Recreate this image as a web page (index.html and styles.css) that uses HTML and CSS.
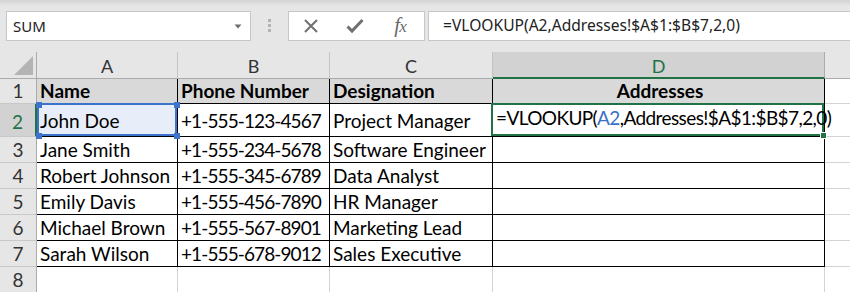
FILE: index.html
```html
<!DOCTYPE html>
<html>
<head>
<meta charset="utf-8">
<link rel="stylesheet" href="styles.css">
</head>
<body>
<div class="app">
  <div class="toolbar">
    <div class="namebox">
      <span class="nb-text">SUM</span>
      <svg class="nb-arrow" width="8" height="5" viewBox="0 0 8 5"><path d="M0.5 0.5h7l-3.5 4z" fill="#6d6d6d"/></svg>
    </div>
    <div class="grip"><i></i><i></i><i></i></div>
    <div class="fbtns">
      <div class="slot">
        <svg width="16" height="16" viewBox="0 0 16 16"><path d="M2 2L14 14M14 2L2 14" stroke="#707070" stroke-width="2" fill="none"/></svg>
      </div>
      <div class="slot">
        <svg width="18" height="16" viewBox="0 0 18 16"><path d="M1.5 8.5L6 13L16.5 2" stroke="#707070" stroke-width="3" fill="none"/></svg>
      </div>
      <div class="slot"><span class="fx">f<span class="fx-x">x</span></span></div>
    </div>
    <div class="fbar">=VLOOKUP(A2,Addresses!$A$1:$B$7,2,0)</div>
  </div>

  <div class="sheet">
    <div class="corner"><svg width="19" height="19" viewBox="0 0 19 19"><path d="M19 0V19H0z" fill="#b4b4b4"/></svg></div>
    <div class="hd">A</div>
    <div class="hd">B</div>
    <div class="hd">C</div>
    <div class="hd sel">D</div>
    <div class="hd last"></div>

    <div class="rh">1</div>
    <div class="cell b r1">Name</div>
    <div class="cell b r1">Phone Number</div>
    <div class="cell b r1">Designation</div>
    <div class="cell b r1 center">Addresses</div>
    <div class="cell"></div>

    <div class="rh sel r2">2</div>
    <div class="cell b r2 ref">John Doe<span class="h tl"></span><span class="h tr"></span><span class="h bl"></span><span class="h br"></span></div>
    <div class="cell b r2 num">+1-555-123-4567</div>
    <div class="cell b r2">Project Manager</div>
    <div class="cell b active"><span class="edit">=VLOOKUP(<span class="refc">A2</span>,Addresses!$A$1:$B$7,2,0)</span><span class="caret"></span><span class="fill"></span></div>
    <div class="cell"></div>

    <div class="rh">3</div>
    <div class="cell b">Jane Smith</div>
    <div class="cell b num">+1-555-234-5678</div>
    <div class="cell b">Software Engineer</div>
    <div class="cell b"></div>
    <div class="cell"></div>

    <div class="rh">4</div>
    <div class="cell b">Robert Johnson</div>
    <div class="cell b num">+1-555-345-6789</div>
    <div class="cell b">Data Analyst</div>
    <div class="cell b"></div>
    <div class="cell"></div>

    <div class="rh">5</div>
    <div class="cell b">Emily Davis</div>
    <div class="cell b num">+1-555-456-7890</div>
    <div class="cell b">HR Manager</div>
    <div class="cell b"></div>
    <div class="cell"></div>

    <div class="rh">6</div>
    <div class="cell b">Michael Brown</div>
    <div class="cell b num">+1-555-567-8901</div>
    <div class="cell b">Marketing Lead</div>
    <div class="cell b"></div>
    <div class="cell"></div>

    <div class="rh">7</div>
    <div class="cell b">Sarah Wilson</div>
    <div class="cell b num">+1-555-678-9012</div>
    <div class="cell b">Sales Executive</div>
    <div class="cell b"></div>
    <div class="cell"></div>

    <div class="rh">8</div>
    <div class="cell"></div>
    <div class="cell"></div>
    <div class="cell"></div>
    <div class="cell"></div>
    <div class="cell"></div>
  </div>
</div>
</body>
</html>
```

FILE: styles.css
```css
html, body {
  margin: 0;
  padding: 0;
  background: #ffffff;
}
.app {
  width: 850px;
  height: 292px;
  overflow: hidden;
  background: #e6e6e6;
}

/* ---------- toolbar / formula bar ---------- */
.toolbar {
  height: 52px;
  box-sizing: border-box;
  padding-top: 11px;
  display: flex;
  align-items: flex-start;
  background: linear-gradient(#d3d3d3 0, #e6e6e6 6px, #e6e6e6 100%);
}
.namebox {
  margin-left: 6px;
  width: 245px;
  height: 30px;
  box-sizing: border-box;
  border: 1px solid #c6c6c6;
  background: #fff;
  display: flex;
  align-items: center;
  padding-left: 6px;
  padding-right: 8px;
}
.nb-text {
  flex: 1;
  font-family: "Noto Sans", "Open Sans", sans-serif;
  font-size: 15px;
  color: #222;
}
.nb-arrow { display: block; margin-top: 1px; }
.grip {
  margin-left: 17px;
  margin-top: 8px;
  display: flex;
  flex-direction: column;
  gap: 2px;
}
.grip i {
  display: block;
  width: 3px;
  height: 3px;
  background: #b3b3b3;
}
.fbtns {
  margin-left: 17px;
  width: 137px;
  height: 30px;
  box-sizing: border-box;
  border: 1px solid #c6c6c6;
  background: #fff;
  display: flex;
  align-items: center;
}
.slot {
  width: 44px;
  height: 28px;
  display: flex;
  align-items: center;
  justify-content: center;
}
.slot svg { display: block; }
.fx {
  font-family: "Liberation Serif", serif;
  font-style: italic;
  font-size: 21px;
  line-height: 24px;
  color: #6a6a6a;
  letter-spacing: -1px;
  padding-left: 2px;
}
.fx-x { font-size: 17px; }
.fbar {
  margin-left: 3px;
  flex: 1;
  height: 30px;
  box-sizing: border-box;
  border: 1px solid #c6c6c6;
  border-right: none;
  background: #fff;
  padding-left: 14px;
  font-family: "Noto Sans", "Open Sans", sans-serif;
  font-size: 15.6px;
  line-height: 27px;
  color: #222;
  white-space: nowrap;
}

/* ---------- grid ---------- */
.sheet {
  display: grid;
  grid-template-columns: 37px 141px 152px 163px 332px 30px;
  grid-template-rows: 27px 25px 33px 26px 26px 26px 26px 26px 26px;
  background: #fff;
  font-family: "Lato", "Liberation Sans", sans-serif;
  font-size: 19px;
  color: #000;
}
.corner {
  background: #e6e6e6;
  border-right: 1px solid #ababab;
  border-bottom: 1px solid #ababab;
  display: flex;
  align-items: flex-end;
  justify-content: flex-end;
  padding: 0 3px 3px 0;
  box-sizing: border-box;
}
.corner svg { display: block; }
.hd {
  background: #e6e6e6;
  border-right: 1px solid #c4c4c4;
  border-bottom: 1px solid #ababab;
  box-sizing: border-box;
  display: flex;
  align-items: center;
  justify-content: center;
  font-size: 18px;
  color: #333;
  padding-top: 2px;
}
.hd.last { border-right: none; }
.hd.sel {
  background: #d2d2d2;
  color: #217346;
  border-bottom: 2px solid #217346;
  border-right-color: #ababab;
}
.rh {
  background: #e6e6e6;
  border-right: 1px solid #ababab;
  border-bottom: 1px solid #c8c8c8;
  box-sizing: border-box;
  display: flex;
  align-items: flex-end;
  justify-content: center;
  line-height: 24px;
  color: #333;
}
.rh.sel {
  background: #d2d2d2;
  color: #217346;
  border-right: 2px solid #217346;
}
.rh.r2 { padding-bottom: 2px; }
.cell {
  position: relative;
  border-right: 1px solid #d4d4d4;
  border-bottom: 1px solid #d4d4d4;
  box-sizing: border-box;
  display: flex;
  align-items: flex-end;
  padding-left: 3px;
  line-height: 24px;
  white-space: nowrap;
  overflow: hidden;
}
.cell.b {
  border-right-color: #000;
  border-bottom-color: #000;
}
.cell.num { letter-spacing: -0.9px; }
.cell.r1 {
  background: #d9d9d9;
  font-weight: bold;
}
.cell.center { justify-content: center; }
.cell.r2 { padding-bottom: 3px; }

/* referenced cell A2 (blue range highlight) */
.cell.ref {
  background: #e8eef9;
  overflow: visible;
  z-index: 2;
}
.cell.ref::after {
  content: "";
  position: absolute;
  left: 0;
  top: -1px;
  right: 0;
  bottom: 0;
  border: 2px solid #3c74cc;
  pointer-events: none;
}
.h {
  position: absolute;
  width: 6px;
  height: 6px;
  background: #3c74cc;
  z-index: 3;
}
.h.tl { left: -1px; top: -2px; }
.h.tr { right: -3px; top: -2px; }
.h.bl { left: -1px; bottom: -3px; }
.h.br { right: -3px; bottom: -3px; }

/* active editing cell D2 */
.cell.active {
  overflow: visible;
  align-items: flex-start;
  padding-top: 2px;
  z-index: 2;
}
.cell.active::before {
  content: "";
  position: absolute;
  left: -2px;
  top: -1px;
  right: 0;
  bottom: 0;
  border: 2px solid #217346;
  pointer-events: none;
}
.edit {
  position: relative;
  z-index: 1;
  letter-spacing: -0.6px;
}
.refc { color: #3a6fc6; }
.caret {
  display: block;
  width: 1px;
  height: 22px;
  background: #000;
  margin-top: 2px;
  margin-left: 2px;
  position: relative;
  z-index: 1;
}
.fill {
  position: absolute;
  right: -3px;
  bottom: -3px;
  width: 5px;
  height: 5px;
  background: #217346;
  border: 1px solid #fff;
  z-index: 3;
}
```
